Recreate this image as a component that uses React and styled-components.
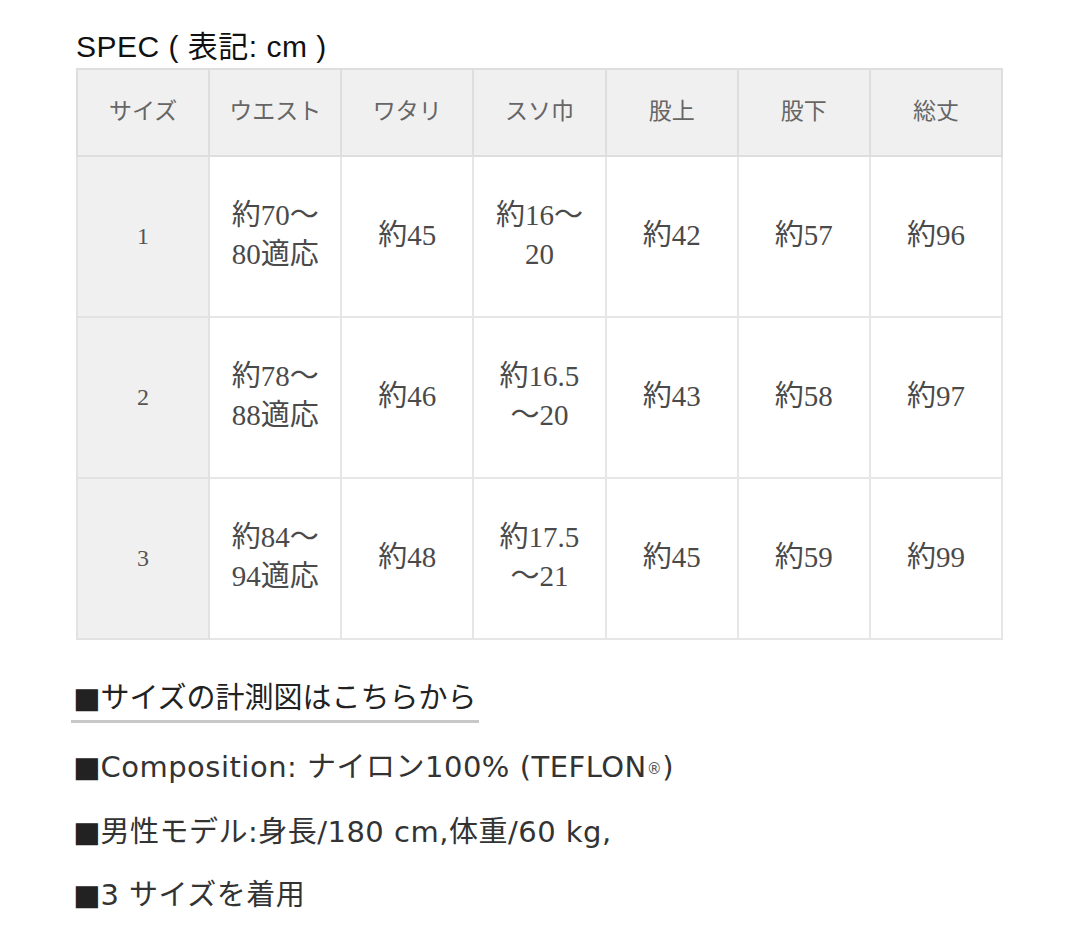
import React from "react";
import styled, { createGlobalStyle } from "styled-components";

const Global = createGlobalStyle`
  html, body { margin: 0; padding: 0; background: #ffffff; }
  body { font-family: "DejaVu Sans", "Noto Sans CJK JP", sans-serif; }
`;

const Page = styled.div`
  width: 1080px;
  height: 929px;
  box-sizing: border-box;
  padding: 30px 0 0 76px;
  overflow: hidden;
`;

const Title = styled.h2`
  margin: 0;
  font-family: "Liberation Sans", "Noto Sans CJK JP", sans-serif;
  font-weight: 400;
  font-size: 30px;
  line-height: 34px;
  letter-spacing: 0.5px;
  color: #111;
  height: 38px;
`;

const Table = styled.table`
  border-collapse: collapse;
  width: 927px;
  table-layout: fixed;
  border: 2px solid #dcdcdc;
  font-family: "Liberation Serif", "Noto Sans CJK JP", serif;
  color: #555;
`;

const HeadRow = styled.tr`
  height: 87px;
`;

const BodyRow = styled.tr`
  height: 161px;
`;

const Th = styled.th`
  background: #f0f0f0;
  border: 2px solid #dedede;
  font-weight: 400;
  font-size: 23px;
  color: #666;
  text-align: center;
  padding: 0 0 8px 0;
`;

const SizeCell = styled.td`
  background: #f0f0f0;
  border: 2px solid #e2e2e2;
  font-size: 24px;
  color: #555;
  text-align: center;
  padding: 0;
`;

const Td = styled.td`
  background: #fff;
  border: 2px solid #e6e6e6;
  font-size: 29px;
  line-height: 39px;
  text-align: center;
  padding: 0 0 3px 0;
  color: #4a4a4a;
`;

const Notes = styled.div`
  display: flex;
  flex-direction: column;
  align-items: flex-start;
  margin-top: 38px;
  margin-left: -5px;
  font-family: "DejaVu Sans", "Noto Sans CJK JP", sans-serif;
`;

const LinkLine = styled.a`
  display: inline-block;
  font-size: 29px;
  line-height: 40px;
  color: #222;
  text-decoration: none;
  padding: 0 2px 2px 2px;
  border-bottom: 3px solid #c8c8c8;
`;

const Note = styled.p`
  margin: ${(p) => p.$top}px 0 0 2px;
  font-size: 29px;
  line-height: 40px;
  letter-spacing: 0.5px;
  color: #333;
`;

const Square = styled.span`
  color: #222;
  letter-spacing: 0;
`;

const Reg = styled.span`
  font-size: 15px;
  vertical-align: 3px;
  color: #555;
`;

const headers = ["サイズ", "ウエスト", "ワタリ", "スソ巾", "股上", "股下", "総丈"];

const rows = [
  ["1", ["約70〜", "80適応"], ["約45"], ["約16〜", "20"], ["約42"], ["約57"], ["約96"]],
  ["2", ["約78〜", "88適応"], ["約46"], ["約16.5", "〜20"], ["約43"], ["約58"], ["約97"]],
  ["3", ["約84〜", "94適応"], ["約48"], ["約17.5", "〜21"], ["約45"], ["約59"], ["約99"]],
];

export default function App() {
  return (
    <>
      <Global />
      <Page>
        <Title>SPEC ( 表記: cm )</Title>
        <Table>
          <thead>
            <HeadRow>
              {headers.map((h) => (
                <Th key={h}>{h}</Th>
              ))}
            </HeadRow>
          </thead>
          <tbody>
            {rows.map(([size, ...cells]) => (
              <BodyRow key={size}>
                <SizeCell>{size}</SizeCell>
                {cells.map((lines, i) => (
                  <Td key={i}>
                    {lines.map((l, j) => (
                      <React.Fragment key={j}>
                        {j > 0 && <br />}
                        {l}
                      </React.Fragment>
                    ))}
                  </Td>
                ))}
              </BodyRow>
            ))}
          </tbody>
        </Table>
        <Notes>
          <LinkLine href="#">
            <Square>■</Square>サイズの計測図はこちらから
          </LinkLine>
          <Note $top={24}>
            <Square>■</Square>Composition: ナイロン100% (TEFLON<Reg>®</Reg>)
          </Note>
          <Note $top={23}>
            <Square>■</Square>男性モデル:身長/180 cm,体重/60 kg,
          </Note>
          <Note $top={23}>
            <Square>■</Square>3 サイズを着用
          </Note>
        </Notes>
      </Page>
    </>
  );
}
